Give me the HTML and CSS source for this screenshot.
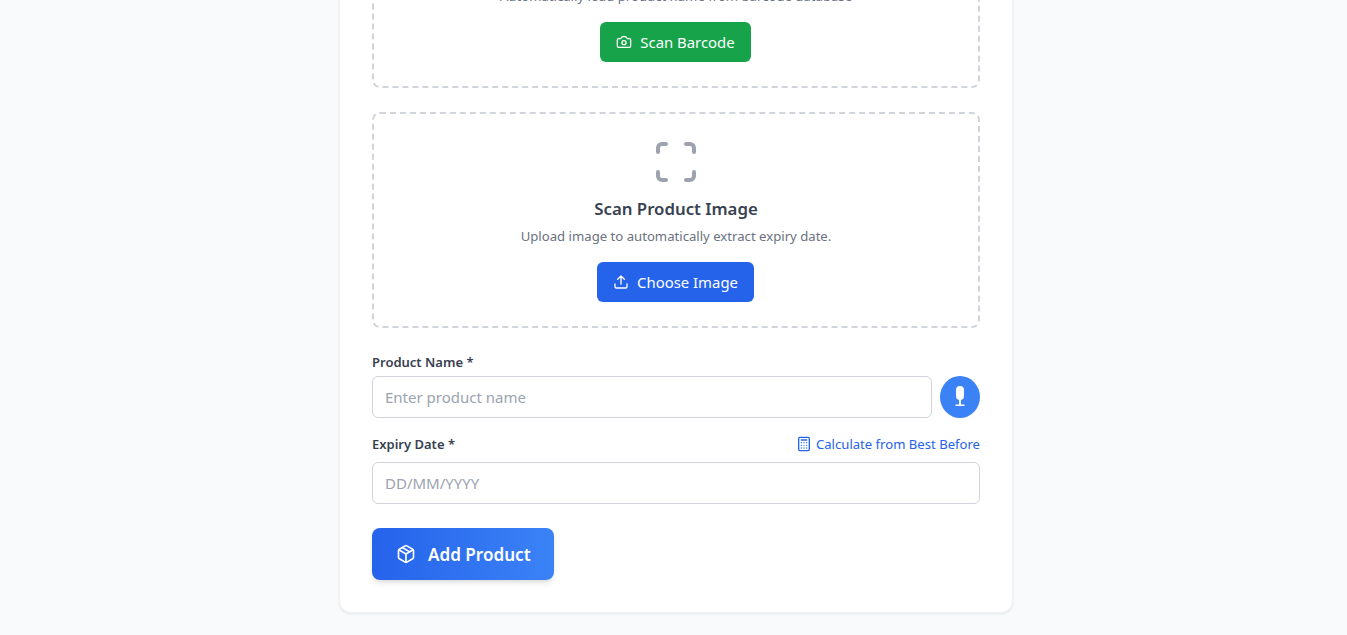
FILE: index.html
```html
<!DOCTYPE html>
<html lang="en">
<head>
<meta charset="utf-8">
<title>Add Product</title>
<link rel="stylesheet" href="styles.css">
</head>
<body>
<main class="card">
  <section class="drop">
    <svg class="drop-icon" viewBox="0 0 24 24"><path d="M3 7V5a2 2 0 0 1 2-2h2M17 3h2a2 2 0 0 1 2 2v2M21 17v2a2 2 0 0 1-2 2h-2M7 21H5a2 2 0 0 1-2-2v-2"/></svg>
    <h2 class="drop-title">Scan Product Barcode</h2>
    <p class="drop-text">Automatically load product name from barcode database</p>
    <button class="btn btn-green" type="button">
      <svg class="btn-icon" viewBox="0 0 24 24"><path d="M14.5 4h-5L7 7H4a2 2 0 0 0-2 2v9a2 2 0 0 0 2 2h16a2 2 0 0 0 2-2V9a2 2 0 0 0-2-2h-3z"/><circle cx="12" cy="13" r="3"/></svg>
      Scan Barcode
    </button>
  </section>
  <section class="drop">
    <svg class="drop-icon" viewBox="0 0 24 24"><path d="M3 7V5a2 2 0 0 1 2-2h2M17 3h2a2 2 0 0 1 2 2v2M21 17v2a2 2 0 0 1-2 2h-2M7 21H5a2 2 0 0 1-2-2v-2"/></svg>
    <h2 class="drop-title">Scan Product Image</h2>
    <p class="drop-text">Upload image to automatically extract expiry date.</p>
    <button class="btn btn-blue" type="button">
      <svg class="btn-icon" viewBox="0 0 24 24"><path d="M21 15v4a2 2 0 0 1-2 2H5a2 2 0 0 1-2-2v-4M17 8l-5-5-5 5M12 3v12"/></svg>
      Choose Image
    </button>
  </section>
  <div class="field name-field">
    <label class="label" for="name">Product Name *</label>
    <div class="input-row">
      <input class="input" id="name" type="text" placeholder="Enter product name">
      <button class="mic" type="button" aria-label="Voice input">
        <svg class="mic-icon" viewBox="0 0 16 22"><rect x="4" y="0" width="8" height="14" rx="4"/><rect x="7" y="13" width="2" height="6"/><rect x="3.500" y="18.500" width="9" height="1.500"/></svg>
      </button>
    </div>
  </div>
  <div class="field">
    <div class="label-row">
      <label class="label" for="date">Expiry Date *</label>
      <a class="calc" href="#">
        <svg class="calc-icon" viewBox="0 0 24 24"><rect x="4" y="2" width="16" height="20" rx="2"/><path d="M8 6h8M8 10h.01M12 10h.01M16 10h.01M8 14h.01M12 14h.01M16 14h.01M8 18h.01M12 18h.01M16 18h.01"/></svg>
        Calculate from Best Before
      </a>
    </div>
    <input class="input" id="date" type="text" placeholder="DD/MM/YYYY">
  </div>
  <button class="submit" type="button">
    <svg class="submit-icon" viewBox="0 0 24 24"><path d="M21 8a2 2 0 0 0-1-1.730l-7-4a2 2 0 0 0-2 0l-7 4A2 2 0 0 0 3 8v8a2 2 0 0 0 1 1.730l7 4a2 2 0 0 0 2 0l7-4A2 2 0 0 0 21 16Z"/><path d="m3.300 7 8.700 5 8.700-5M12 22V12M7.500 4.270l9 5.150"/></svg>
    <span class="submit-label">Add Product</span>
  </button>
</main>
</body>
</html>
```
FILE: styles.css
```css
* { box-sizing: border-box; }
html, body { margin: 0; height: 635px; overflow: hidden; }
body {
  background: #f9fafb;
  font-family: "Noto Sans", "Open Sans", sans-serif;
  color: #374151;
  display: flex;
  flex-direction: column;
  justify-content: flex-end;
  align-items: center;
  padding-bottom: 22px;
  padding-left: 5px;
}
.card {
  flex: none;
  width: 674px;
  padding: 32px;
  background: #fff;
  border: 1px solid #f0f1f3;
  border-radius: 12px;
  box-shadow: 0 1px 3px rgba(0, 0, 0, .08);
}
.drop {
  border: 2px dashed #d1d5db;
  border-radius: 8px;
  padding: 24px;
  margin-bottom: 24px;
  display: flex;
  flex-direction: column;
  align-items: center;
  text-align: center;
}
.drop-icon { width: 48px; height: 48px; fill: none; stroke: #9ca3af; stroke-width: 2; stroke-linecap: round; stroke-linejoin: round; margin-bottom: 9px; }
.drop-title { margin: 0 0 3px; font-size: 16.800px; line-height: 28px; font-weight: 600; color: #374151; }
.drop-text { margin: 0 0 16px; font-size: 13.150px; line-height: 20px; color: #6b7280; }
.btn {
  height: 40px;
  width: fit-content;
  min-width: 151px;
  margin-right: 1px;
  display: inline-flex;
  align-items: center;
  justify-content: center;
  gap: 8px;
  padding: 0 16px;
  border: 0;
  border-radius: 6px;
  color: #fff;
  font: 400 14.900px/24px "Noto Sans", "Open Sans", sans-serif;
}
.btn-green { background: #16a34a; }
.btn-blue { background: #2563eb; min-width: 157px; }
.btn-icon { width: 16px; height: 16px; fill: none; stroke: #fff; stroke-width: 2; stroke-linecap: round; stroke-linejoin: round; }
.field { margin-bottom: 24px; }
.name-field { margin-bottom: 16px; }
.label { display: block; font-size: 13px; line-height: 20px; font-weight: 600; color: #374151; }
.name-field .label { margin-bottom: 4px; }
.label-row { display: flex; justify-content: space-between; align-items: center; margin-bottom: 8px; }
.input-row { display: flex; gap: 8px; }
.input {
  display: block;
  flex: 1;
  width: 100%;
  height: 42px;
  padding: 0 12px;
  border: 1px solid #d1d5db;
  border-radius: 6px;
  background: #fff;
  color: #374151;
  font: 400 15px "Noto Sans", "Open Sans", sans-serif;
}
.input::placeholder { color: #9ca3af; opacity: 1; }
.mic {
  flex: none;
  width: 40px;
  height: 42px;
  border: 0;
  padding: 0;
  border-radius: 50%;
  background: #3b82f6;
  display: flex;
  align-items: center;
  justify-content: center;
}
.mic-icon { width: 16px; height: 22px; fill: #fff; }
.calc { display: inline-flex; align-items: center; gap: 4px; font-size: 13.100px; line-height: 20px; color: #2563eb; text-decoration: none; }
.calc-icon { width: 16px; height: 16px; fill: none; stroke: #2563eb; stroke-width: 2; stroke-linecap: round; stroke-linejoin: round; }
.submit {
  height: 52px;
  display: inline-flex;
  align-items: center;
  gap: 12px;
  padding: 0 23px 0 24px;
  border: 0;
  border-radius: 8px;
  background: linear-gradient(90deg, #2563eb, #3b82f6);
  box-shadow: 0 4px 6px -1px rgba(0, 0, 0, .1), 0 2px 4px -2px rgba(0, 0, 0, .1);
  color: #fff;
  font: 600 17.100px/28px "Noto Sans", "Open Sans", sans-serif;
}
.submit-label { padding-top: 2px; }
.submit-icon { width: 20px; height: 20px; fill: none; stroke: #fff; stroke-width: 2; stroke-linecap: round; stroke-linejoin: round; }
```
